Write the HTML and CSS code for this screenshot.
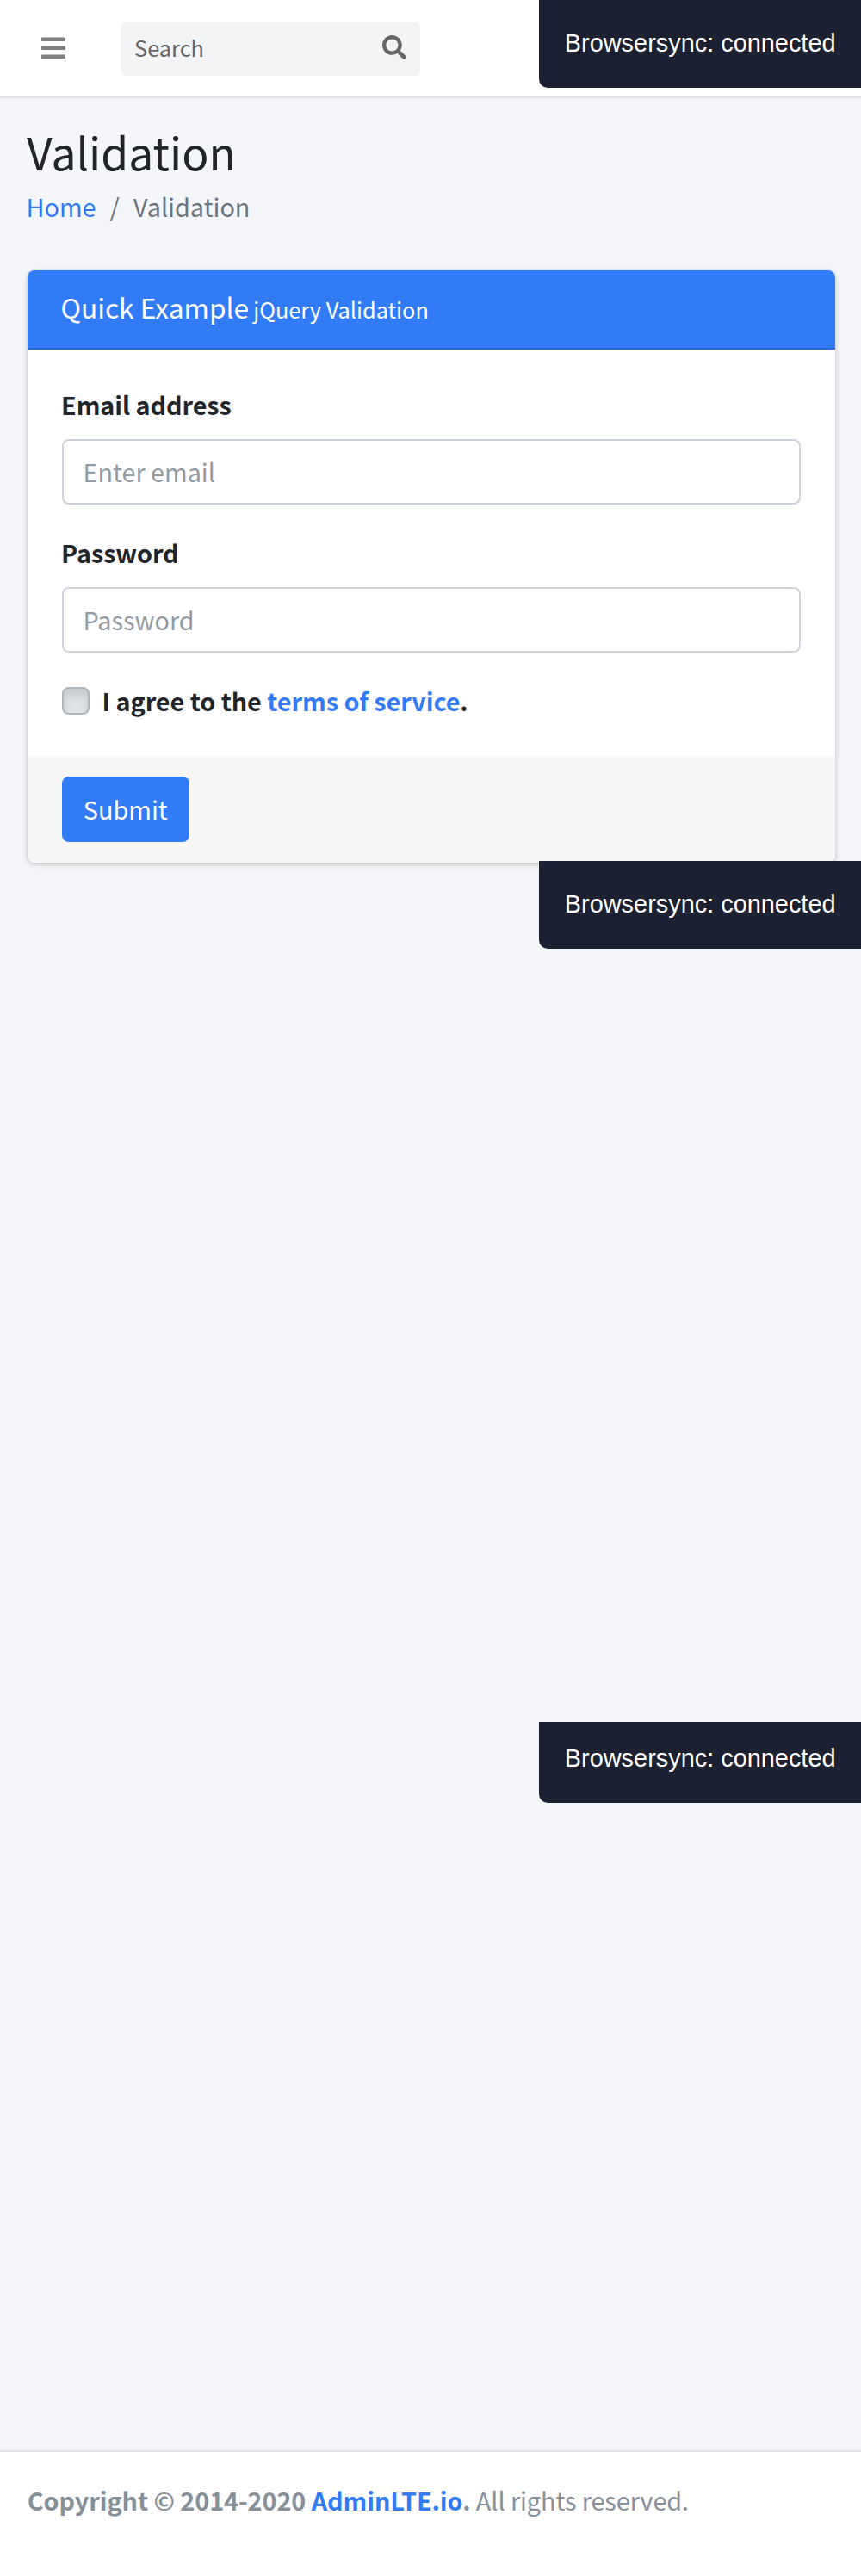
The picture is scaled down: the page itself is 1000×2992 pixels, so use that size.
FILE: index.html
```html
<!DOCTYPE html>
<html lang="en">
<head>
<meta charset="utf-8">
<title>Validation</title>
<link rel="stylesheet" href="styles.css">
</head>
<body>
<div class="wrapper">
  <nav class="navbar">
    <svg class="menu-icon" viewBox="0 0 28 26"><rect y="0.5" width="28" height="4.5" rx="1"/><rect y="10.5" width="28" height="4.5" rx="1"/><rect y="20.5" width="28" height="4.5" rx="1"/></svg>
    <div class="search"><span>Search</span>
      <svg class="search-icon" viewBox="0 0 512 512"><path d="M505 442.7L405.3 343c-4.5-4.5-10.6-7-17-7H372c27.6-35.3 44-79.7 44-128C416 93.1 322.9 0 208 0S0 93.1 0 208s93.1 208 208 208c48.3 0 92.7-16.4 128-44v16.3c0 6.4 2.5 12.5 7 17l99.7 99.7c9.4 9.4 24.6 9.4 33.9 0l28.3-28.3c9.4-9.4 9.4-24.6.1-34zM208 336c-70.7 0-128-57.2-128-128 0-70.7 57.2-128 128-128 70.7 0 128 57.2 128 128 0 70.7-57.2 128-128 128z"/></svg>
    </div>
  </nav>
  <main class="content">
    <h1>Validation</h1>
    <div class="breadcrumb"><a>Home</a><span class="slash">/</span><span>Validation</span></div>
    <section class="card">
      <header class="card-header">Quick Example <small>jQuery Validation</small></header>
      <form>
        <div class="card-body">
          <div class="group"><label for="email">Email address</label><input class="input" id="email" type="email" placeholder="Enter email"></div>
          <div class="group"><label for="password">Password</label><input class="input" id="password" type="password" placeholder="Password"></div>
          <div class="check"><i class="box"></i><b>I agree to the <a>terms of service</a>.</b></div>
        </div>
        <div class="card-footer"><button class="btn" type="button">Submit</button></div>
      </form>
    </section>
  </main>
  <footer class="footer"><b>Copyright © 2014-2020 <a>AdminLTE.io</a>.</b> All rights reserved.</footer>
  <div class="toast toast-1">Browsersync: connected</div>
  <div class="toast toast-2">Browsersync: connected</div>
  <div class="toast toast-3">Browsersync: connected</div>
</div>
</body>
</html>
```
FILE: styles.css
```css
* { box-sizing: border-box; }
body {
  margin: 0;
  background: #f4f6f9;
  color: #212529;
  font: 400 28.8px/48px "Noto Sans CJK SC", "Noto Sans", sans-serif;
}
a { color: #317bf7; }
.wrapper { position: relative; display: flex; flex-direction: column; height: 2992px; }
.navbar { display: flex; align-items: flex-start; height: 114px; padding: 26px 48px 0; background: #fff; border-bottom: 2px solid #dee2e6; }
.menu-icon { width: 28px; height: 26px; margin: 17px 64px 0 0; fill: #808080; }
.search { display: flex; justify-content: space-between; width: 348px; height: 62px; padding: 0 16px; border-radius: 6px; background: #f2f4f6; color: #666; font-size: 25.4px; line-height: 58px; }
.search-icon { width: 28px; height: 28px; margin-top: 15px; fill: #666; }
.content { flex: 1; padding: 27px 30px 0 32px; }
h1 { margin: 0; font-size: 51.6px; font-weight: 400; line-height: 70px; text-indent: -1px; }
.breadcrumb { display: flex; margin: 5px 0 0 -1.5px; color: #6c757d; }
.slash { margin: 0 16px; }
.card { margin-top: 50px; border-radius: 8px; background: #fff; box-shadow: 0 0 2px rgba(0,0,0,.125), 0 2px 6px rgba(0,0,0,.2); overflow: hidden; }
.card-header { height: 92px; padding: 24px 38.5px; border-bottom: 2px solid #2a6dd9; background: #317bf7; color: #fff; font-size: 31.7px; line-height: 36px; }
.card-header small { margin-left: -2px; font-size: 25.3px; }
.card-body { padding: 40px; }
.group { margin-bottom: 32px; }
label { display: block; margin-bottom: 16px; font-weight: 700; text-indent: -1px; letter-spacing: -.05px; }
.input { display: block; width: 100%; height: 76px; padding: 11px 22.5px 13px; border: 2px solid #ced4da; border-radius: 8px; background: #fff; font: inherit; }
.input::placeholder { color: #939ba2; opacity: 1; }
.check { display: flex; align-items: center; gap: 14.6px; height: 48px; letter-spacing: -.05px; }
.box { width: 32px; height: 32px; border: 2px solid #adb5bd; border-radius: 8px; background: #dee2e6; box-shadow: inset 0 8px 8px rgba(0,0,0,.1); }
.card-footer { padding: 24px 40px; background: #f7f7f7; }
.btn { display: block; width: 148px; height: 76px; padding: 14px 0 14px 24.8px; border: 0; border-radius: 8px; background: #317bf7; color: #fff; font: inherit; text-align: left; }
.footer { height: 146px; padding: 32px 31.8px; border-top: 2px solid #dee2e6; background: #fff; color: #869099; letter-spacing: -.07px; }
.toast { position: absolute; left: 626px; right: 0; height: 102px; padding: 26px 29.8px; border-radius: 0 0 0 10px; background: #1b2032; color: #fff; font: 28.9px/48px "Liberation Sans", Arial, sans-serif; white-space: nowrap; }
.toast-1 { top: 0; }
.toast-2 { top: 1000px; }
.toast-3 { top: 2000px; height: 94px; padding-top: 18px; }
```
